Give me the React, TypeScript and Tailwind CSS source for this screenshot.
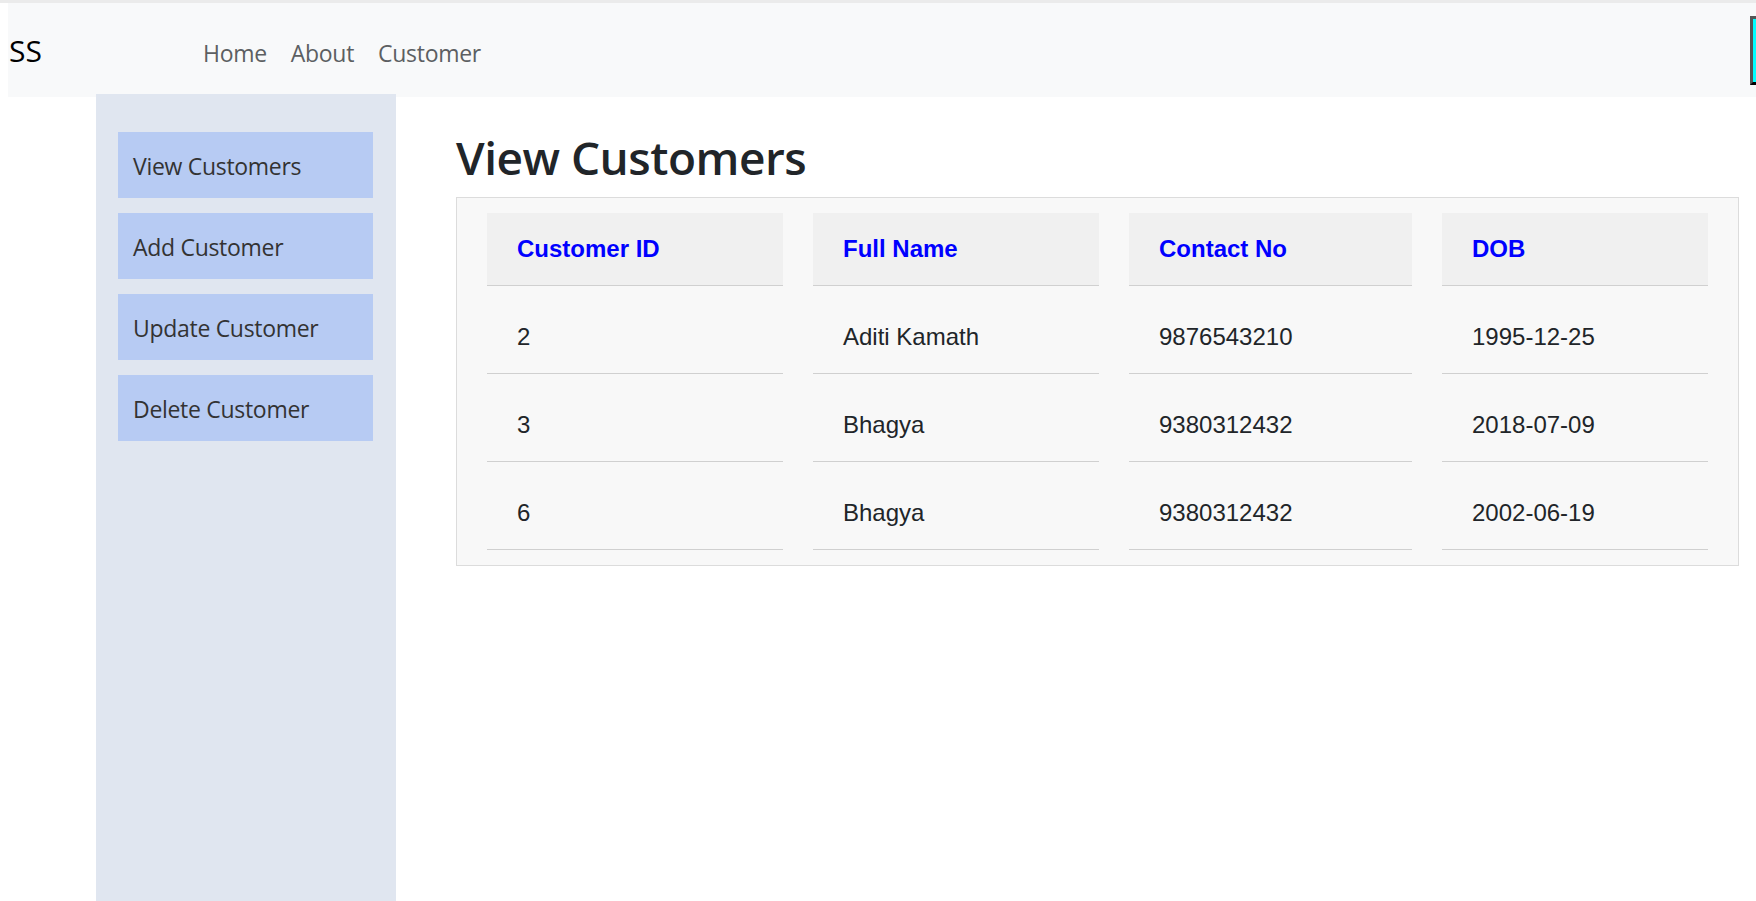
import React from "react";

const rows = [
  { id: "2", name: "Aditi Kamath", contact: "9876543210", dob: "1995-12-25" },
  { id: "3", name: "Bhagya", contact: "9380312432", dob: "2018-07-09" },
  { id: "6", name: "Bhagya", contact: "9380312432", dob: "2002-06-19" },
];

const menu = ["View Customers", "Add Customer", "Update Customer", "Delete Customer"];

export default function App() {
  return (
    <div className="h-screen w-full overflow-hidden bg-white font-['Open_Sans','Noto_Sans',sans-serif]">
      <div className="h-[3px] bg-[#ebebeb]" />
      <nav className="ml-[8px] h-[94px] bg-[#f8f9fa] flex items-start overflow-hidden">
        <div className="flex items-baseline pt-[25px] pl-[1px]">
          <span className="w-[182px] text-[30px] leading-[45px] text-black">SS</span>
          {["Home", "About", "Customer"].map((l) => (
            <span
              key={l}
              className="px-[12px] text-[23px] leading-[36px] tracking-[-0.3px] text-[#5c5f62]"
            >
              {l}
            </span>
          ))}
        </div>
        <div className="ml-auto mt-[13px] w-[6px] h-[69px] overflow-hidden shrink-0">
          <div className="w-[60px] h-full border-[3px] border-[#555555] border-b-black bg-[#00ffff]" />
        </div>
      </nav>
      <div className="flex -mt-[3px] h-[calc(100vh-94px)]">
        <aside className="ml-[96px] w-[300px] shrink-0 bg-[#e0e6f0] pt-[38px] pl-[22px] pr-[23px] flex flex-col gap-[15px]">
          {menu.map((m) => (
            <div
              key={m}
              className="bg-[#b7cbf3] px-[15px] pt-[16px] pb-[14px] text-[23px] leading-[36px] tracking-[-0.3px] text-[#333333]"
            >
              {m}
            </div>
          ))}
        </aside>
        <main className="flex-1 pl-[60px] pr-[17px] pt-[36px]">
          <h1 className="text-[46px] leading-[55px] font-semibold tracking-[-0.5px] text-[#212529] mb-[12px]">
            View Customers
          </h1>
          <div className="border border-[#dcdcdc] bg-[#f8f8f8] font-['Liberation_Sans',Arial,sans-serif] text-[24px] leading-[36px]">
            <table className="w-full table-fixed border-separate border-spacing-x-[30px] border-spacing-y-[15px]">
              <thead>
                <tr>
                  {[
                    ["Customer ID", "w-[296px]"],
                    ["Full Name", "w-[286px]"],
                    ["Contact No", "w-[283px]"],
                    ["DOB", ""],
                  ].map(([h, w]) => (
                    <th
                      key={h}
                      className={`${w} bg-[#f0f0f0] border-b border-[#d0d0d0] text-left pl-[30px] py-[18px] font-bold text-[#0000ff]`}
                    >
                      {h}
                    </th>
                  ))}
                </tr>
              </thead>
              <tbody>
                {rows.map((r) => (
                  <tr key={r.id}>
                    {[r.id, r.name, r.contact, r.dob].map((c, i) => (
                      <td
                        key={i}
                        className="border-b border-[#d0d0d0] pl-[30px] py-[18px] text-[#212529]"
                      >
                        {c}
                      </td>
                    ))}
                  </tr>
                ))}
              </tbody>
            </table>
          </div>
        </main>
      </div>
    </div>
  );
}
